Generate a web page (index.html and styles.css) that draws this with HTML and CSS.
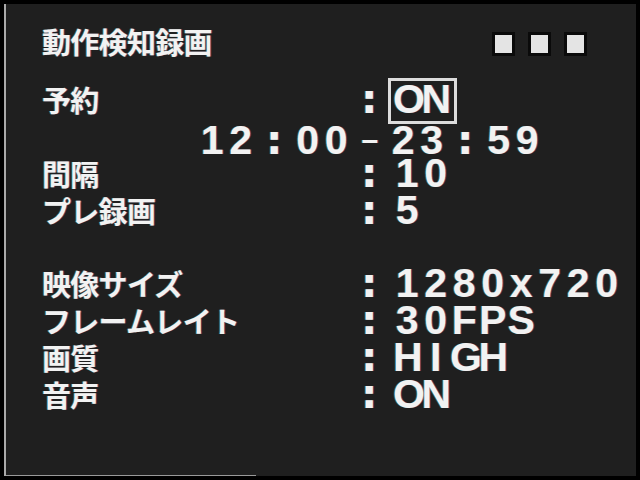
FILE: index.html
```html
<!DOCTYPE html>
<html lang="ja">
<head>
<meta charset="utf-8">
<title>動作検知録画</title>
<link rel="stylesheet" href="styles.css">
</head>
<body>
<div class="screen">
  <div class="title-row">
    <h1 class="title">動作検知録画</h1>
    <div class="indicators">
      <span class="ind"></span>
      <span class="ind"></span>
      <span class="ind"></span>
    </div>
  </div>
  <div class="menu">
    <div class="row first">
      <span class="label">予約</span>
      <span class="colon">:</span>
      <span class="value boxed"><span class="c">O</span><span class="c">N</span></span>
    </div>
    <div class="row time">
      <span class="c">1</span><span class="c">2</span><span class="sep colon-s">:</span><span class="c">0</span><span class="c">0</span><span class="sep dash">&ndash;</span><span class="c">2</span><span class="c">3</span><span class="sep colon-s">:</span><span class="c">5</span><span class="c">9</span>
    </div>
    <div class="row">
      <span class="label">間隔</span>
      <span class="colon">:</span>
      <span class="value"><span class="c">1</span><span class="c">0</span></span>
    </div>
    <div class="row">
      <span class="label">プレ録画</span>
      <span class="colon">:</span>
      <span class="value"><span class="c">5</span></span>
    </div>
    <div class="row blank"></div>
    <div class="row">
      <span class="label">映像サイズ</span>
      <span class="colon">:</span>
      <span class="value"><span class="c">1</span><span class="c">2</span><span class="c">8</span><span class="c">0</span><span class="c">x</span><span class="c">7</span><span class="c">2</span><span class="c">0</span></span>
    </div>
    <div class="row">
      <span class="label">フレームレイト</span>
      <span class="colon">:</span>
      <span class="value"><span class="c">3</span><span class="c">0</span><span class="c">F</span><span class="c">P</span><span class="c">S</span></span>
    </div>
    <div class="row">
      <span class="label">画質</span>
      <span class="colon">:</span>
      <span class="value"><span class="c">H</span><span class="c">I</span><span class="c">G</span><span class="c">H</span></span>
    </div>
    <div class="row">
      <span class="label">音声</span>
      <span class="colon">:</span>
      <span class="value"><span class="c">O</span><span class="c">N</span></span>
    </div>
  </div>
</div>
</body>
</html>
```
FILE: styles.css
```css
html, body {
  margin: 0;
  padding: 0;
  background: #000;
}

.screen {
  position: relative;
  box-sizing: border-box;
  width: 632px;
  height: 472px;
  margin: 4px 0 0 4px;
  padding: 18.5px 0 0 36px;
  background: #1f1f1f;
  border-left: 2px solid #a9a9a9;
  color: #f2f2f2;
  text-shadow: -1px 0 rgba(120, 255, 150, 0.28), 1px 0 rgba(235, 120, 255, 0.32);
}

.screen::after {
  content: "";
  position: absolute;
  left: 0;
  bottom: 0;
  width: 250px;
  height: 1px;
  background: #9a9a9a;
}

.title-row {
  display: flex;
  align-items: flex-start;
  height: 36.8px;
}

.title {
  margin: 0;
  font-family: "Noto Sans CJK JP", sans-serif;
  font-weight: 700;
  font-size: 29px;
  line-height: 36.8px;
  letter-spacing: -0.7px;
}

.indicators {
  display: flex;
  gap: 13px;
  margin: 9.5px 49px 0 auto;
}

.ind {
  display: block;
  width: 17px;
  height: 18px;
  background: #e4e4e4;
  border: 3px solid #0a0a0a;
}

.menu {
  margin-top: 22.2px;
}

.row {
  display: flex;
  align-items: flex-start;
  box-sizing: border-box;
  height: 36.8px;
}

.row.first {
  height: 40.8px;
}

.row.time {
  height: 32.8px;
  padding-left: 156px;
}

.label {
  width: 319px;
  flex: none;
  font-family: "Noto Sans CJK JP", sans-serif;
  font-weight: 700;
  font-size: 29px;
  line-height: 36.8px;
  letter-spacing: -0.7px;
  white-space: nowrap;
}

.colon,
.colon-s {
  font-family: "DejaVu Sans", sans-serif;
  font-weight: 700;
  font-size: 41px;
  line-height: 36.8px;
}

.colon {
  width: 32px;
  flex: none;
}

.value {
  display: flex;
}

.c,
.sep {
  display: block;
  width: 28.5px;
  text-align: center;
  font-family: "Liberation Sans Narrow", "Liberation Sans", sans-serif;
  font-weight: 700;
  font-size: 41px;
  line-height: 36.8px;
}

.sep {
  width: 38.5px;
}

.sep.colon-s {
  font-family: "DejaVu Sans", sans-serif;
}

.sep.dash {
  font-size: 30px;
}

.boxed {
  box-sizing: border-box;
  height: 46px;
  margin: -3.3px 0 0 -5px;
  padding: 0 4px 3.2px 2px;
  border: 3px solid #dcdcdc;
}
```
